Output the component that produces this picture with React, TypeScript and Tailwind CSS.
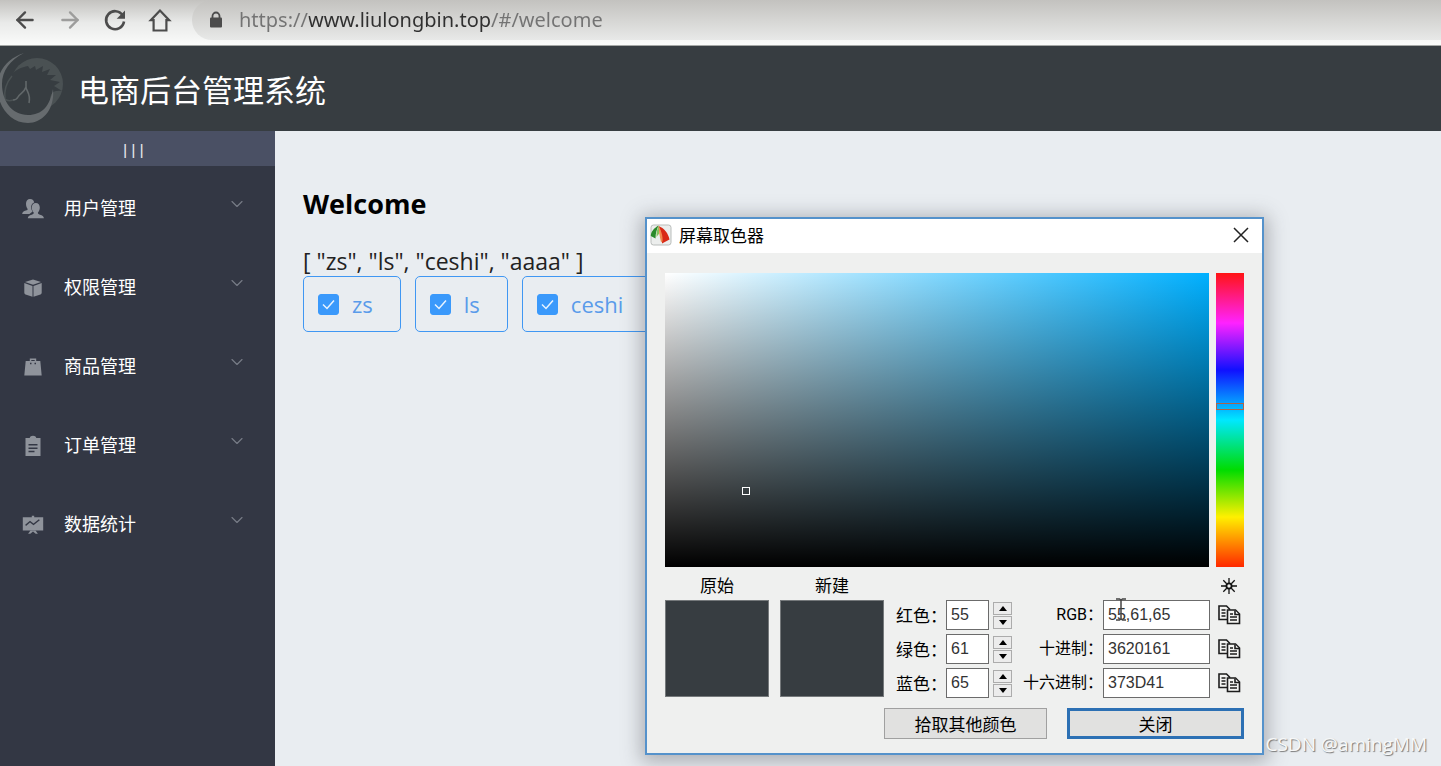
import { useState } from "react";
import type { ReactNode } from "react";
import { ArrowLeft, ArrowRight, ChevronDown } from "lucide-react";

type MenuItem = { label: string; icon: ReactNode };

const iconClass = "h-6 w-6 fill-[#8f939b]";

const menuItems: MenuItem[] = [
  {
    label: "用户管理",
    icon: (
      <svg viewBox="0 0 24 24" className={iconClass}>
        <path d="M9 2c2.6 0 4 1.5 4.200 3.600C11 6.500 10 8.400 10.200 10.800c.1 1.600.6 2.700 1.400 3.700L8.500 17H1.200c0-2 1.500-2.700 3.600-3.400 1.500-.5 2-.9 1.800-1.700C5.500 10.700 5 9 5 6.600 5 3.700 6.600 2 9 2z" />
        <path d="M14.800 6c2.500 0 4 1.800 4 4.500 0 2.100-.7 3.900-1.800 5-.3 1.200.3 1.700 2 2.200 2.300.7 3.800 1.400 3.900 3.600H6.800c.1-2.200 1.600-2.900 3.900-3.600 1.700-.5 2.200-1 2-2.200-1.200-1.100-1.900-2.900-1.900-5C10.800 7.800 12.300 6 14.800 6z" />
      </svg>
    ),
  },
  {
    label: "权限管理",
    icon: (
      <svg viewBox="0 0 24 24" className={iconClass}>
        <path d="M12 3.500l8 2.400-8 2.900-8-2.900z" />
        <path d="M3.300 7l8.200 2.900v10.900l-7-2.400c-.8-.3-1.200-.9-1.200-1.700zM20.700 7v9.700c0 .8-.4 1.400-1.200 1.700l-7 2.400V9.900z" />
      </svg>
    ),
  },
  {
    label: "商品管理",
    icon: (
      <svg viewBox="0 0 24 24" className={iconClass}>
        <path
          fillRule="evenodd"
          d="M8.800 6V3.500h6.400V6h4.100l1.400 14.500H3.300L4.700 6zm1.500 0h3.400V4.900h-3.400zM9 7.700v1.500h1.500V7.700zm4.500 0v1.500H15V7.700z"
        />
      </svg>
    ),
  },
  {
    label: "订单管理",
    icon: (
      <svg viewBox="0 0 24 24" className={iconClass}>
        <path
          fillRule="evenodd"
          d="M4.500 4h4.200C9 2.700 10.300 1.800 12 1.800S15 2.700 15.300 4h4.200v18h-15zM7.500 10v1.500h9V10zm0 3.400v1.500h9v-1.500zm0 3.400v1.500h6v-1.500z"
        />
      </svg>
    ),
  },
  {
    label: "数据统计",
    icon: (
      <svg viewBox="0 0 24 24" className={iconClass}>
        <path
          fillRule="evenodd"
          d="M1.800 4.200h9V2.800h2.400v1.400h9v13.200H1.800zM5 13l4-3.400 3.500 2.700 6.300-5-.9-1-5.400 4.200L9 7.800l-4.800 4z"
        />
        <path d="M9.500 17.400h5l2.400 3.400h-2.200L12 18.600l-2.700 2.200H7.100z" />
      </svg>
    ),
  },
];

const users = ["zs", "ls", "ceshi", "aaaa"];

function BrowserBar() {
  const [url, setUrl] = useState("https://www.liulongbin.top/#/welcome");

  return (
    <div className="flex h-[46px] items-start border-b border-[#a5a8a6] bg-linear-to-b from-[#c3c2bf] via-[#e9eae9] via-50% to-[#fafbfa] pl-3">
      <div className="flex h-10 items-center gap-[19px]">
        <button aria-label="Back">
          <ArrowLeft className="h-[26px] w-[26px] text-[#4c4c4c]" strokeWidth={2.2} />
        </button>
        <button aria-label="Forward">
          <ArrowRight className="h-[26px] w-[26px] text-[#9d9d9c]" strokeWidth={2.2} />
        </button>
        <button aria-label="Reload">
          <svg viewBox="0 0 26 26" className="h-[26px] w-[26px]">
            <path
              d="M20.600 8.200A9 9 0 1 0 22 14.500"
              fill="none"
              stroke="#4c4c4c"
              strokeWidth="2.600"
            />
            <path d="M23 3.500v8.300h-8.300z" fill="#4c4c4c" />
          </svg>
        </button>
        <button aria-label="Home">
          <svg viewBox="0 0 26 26" className="h-[26px] w-[26px]">
            <path
              d="M13 3.500L3.800 13.200H6.600V23.500h12.800V13.200h2.800z"
              fill="none"
              stroke="#4c4c4c"
              strokeWidth="2.200"
            />
          </svg>
        </button>
      </div>
      <div className="ml-[19px] flex h-10 flex-1 items-center gap-4 rounded-l-full bg-linear-to-b from-[#c3c2bf] to-[#e8e9e8] pl-[17px]">
        <svg viewBox="0 0 14 18" className="h-[18px] w-[14px]">
          <path d="M3.500 8V5a3.500 3.500 0 0 1 7 0v3" fill="none" stroke="#4c4c4c" strokeWidth="1.800" />
          <rect x="1" y="6.500" width="12" height="10" rx="1" fill="#4c4c4c" />
        </svg>
        {/* host is darker than the scheme and the path */}
        <input
          aria-label="Address"
          value={url}
          onChange={(e) => setUrl(e.target.value)}
          className="min-w-0 flex-1 bg-[linear-gradient(90deg,#737373_70px,#2f2f2f_70px,#2f2f2f_252px,#737373_252px)] bg-clip-text font-['Noto_Sans',sans-serif] text-xl text-transparent caret-black outline-none"
        />
      </div>
    </div>
  );
}

function Logo() {
  return (
    <svg viewBox="0 0 64 72" className="h-[72px] w-16">
      <circle cx="37" cy="31" r="26" fill="#4a5153" />
      <path
        d="M5 46C4 38 6 30 10 24c4-7 12-10 18-11l2 3 5-3 1 4 7-4-1 6 8-3-3 6 9 0-6 5 10 2-6 4 8 5c-9-1-11 2-12 8 0 10-6 16-18 16C18 62 8 56 5 46z"
        fill="#373d41"
      />
      <path
        d="M5 46C4 38 6 30 12 23M5 46c2 2 5 2 8 1"
        fill="none"
        stroke="#4a5153"
        strokeWidth="1.500"
      />
      <path
        d="M24 0C8 5-2 18-3 32c0 20 12 38 31 38 15 0 27-14 25-34-3 17-11 26-25 26C12 62 2 48 2 31 2 18 10 7 24 0z"
        fill="#666b6e"
      />
      <path
        d="M26 28v6c-2 6-6 6-8 10-1 2-3 3-5 3M26 34c0 4 5 6 3 16"
        fill="none"
        stroke="#62686a"
        strokeWidth="1.600"
      />
    </svg>
  );
}

function Sidebar() {
  return (
    <aside className="w-[275px] shrink-0 bg-[#333744] text-white">
      <button className="block h-[35px] w-full bg-[#4a5064] pr-2 text-center text-[15px] leading-[37px] font-semibold text-[#e4e6ea]">
        |||
      </button>
      <nav className="pt-[2px]">
        {menuItems.map((item) => (
          <button key={item.label} className="flex h-[79px] w-full items-center pr-7 pl-[21px]">
            <span className="pt-[2px]">{item.icon}</span>
            <span className="ml-[19px] text-lg">{item.label}</span>
            <ChevronDown className="mb-2 ml-auto h-5 w-5 text-[#777b86]" strokeWidth={1.4} />
          </button>
        ))}
      </nav>
    </aside>
  );
}

function UserCheckbox({ name }: { name: string }) {
  const [checked, setChecked] = useState(true);

  return (
    <label className="flex h-14 items-center gap-[13px] rounded-[5px] border border-[#3f97f3] pr-[27px] pl-[14px] text-[22px] text-[#5a9bea]">
      <span className="grid h-[21px] w-[21px] place-items-center">
        <input
          type="checkbox"
          checked={checked}
          onChange={(e) => setChecked(e.target.checked)}
          className="peer col-start-1 row-start-1 h-[21px] w-[21px] appearance-none rounded-[3px] border border-[#3a99fb] bg-white checked:bg-[#3a99fb]"
        />
        <svg
          viewBox="0 0 21 21"
          className="pointer-events-none invisible col-start-1 row-start-1 h-[21px] w-[21px] peer-checked:visible"
        >
          <path d="M5 10.500l4 4 7-8" fill="none" stroke="#e8f3ff" strokeWidth="1.500" />
        </svg>
      </span>
      {name}
    </label>
  );
}

function Channel({ id, label, initial }: { id: string; label: string; initial: number }) {
  const [value, setValue] = useState(initial);

  return (
    <div className="flex h-[30px] items-center">
      <label htmlFor={id} className="w-[50px] text-[17px] leading-7 whitespace-nowrap">
        {label}
      </label>
      <input
        id={id}
        value={value}
        onChange={(e) => setValue(Number(e.target.value) || 0)}
        className="h-[30px] w-[43px] border border-[#6b6b6b] bg-white pb-px pl-1 font-['Liberation_Sans',sans-serif] text-base text-[#333]"
      />
      <div className="ml-1 flex flex-col gap-px">
        <button
          aria-label={`${label} +`}
          onClick={() => setValue(Math.min(255, value + 1))}
          className="grid h-[13px] w-[19px] place-items-center border border-[#acacac] bg-[#ececec]"
        >
          <svg viewBox="0 0 8 5" className="h-[5px] w-2">
            <path d="M4 0l4 5H0z" />
          </svg>
        </button>
        <button
          aria-label={`${label} -`}
          onClick={() => setValue(Math.max(0, value - 1))}
          className="grid h-[13px] w-[19px] place-items-center border border-[#acacac] bg-[#ececec]"
        >
          <svg viewBox="0 0 8 5" className="h-[5px] w-2">
            <path d="M4 5l4-5H0z" />
          </svg>
        </button>
      </div>
    </div>
  );
}

function CodeField({ id, label, value }: { id: string; label: string; value: string }) {
  return (
    <div className="flex h-[30px] items-center">
      <label
        htmlFor={id}
        className="flex-1 text-right font-[Roboto,'Noto_Sans_CJK_SC',sans-serif] text-base whitespace-nowrap"
      >
        {label}
      </label>
      <input
        id={id}
        defaultValue={value}
        className="h-[30px] w-[107px] border border-[#6b6b6b] bg-white pb-px pl-1 font-['Liberation_Sans',sans-serif] text-base text-[#333]"
      />
      <button aria-label={`复制 ${label}`} className="mr-[3px] ml-2">
        <svg viewBox="0 0 23 20" className="h-5 w-[23px]" fill="#f4f4f2" stroke="#1d1d1d" strokeWidth="1.600">
          <path d="M1 1h7.500l3 3v10.500H1z" />
          <path d="M3.500 5h4M3.500 8h4M3.500 11h4" />
          <path d="M9.500 5h8l4 4v9.500h-12z" />
          <path d="M17 5.500v4h4M12 9h3M12 12h7M12 15h7" />
        </svg>
      </button>
    </div>
  );
}

function Swatch({ label }: { label: string }) {
  return (
    <div className="w-[104px]">
      <div className="h-5 text-center text-[17px] leading-[18px]">{label}</div>
      <div className="mt-1 h-[97px] border border-[#75797b] bg-[#373d41]" />
    </div>
  );
}

function ColorPicker() {
  return (
    <section className="absolute top-[217px] left-[645px] w-[619px] border-2 border-[#5592cb] bg-[#eff0ef] pb-[14px] font-['Noto_Sans_CJK_SC',sans-serif] text-black shadow-[0_3px_18px_4px_rgba(60,60,70,0.35)]">
      <header className="flex h-[34px] items-center bg-white pr-[13px] pb-[2px] pl-[3px]">
        <svg viewBox="0 0 22 22" className="h-[22px] w-[22px]">
          <rect x="1" y="1" width="20" height="20" rx="2.500" fill="#eceeed" stroke="#b9bdbb" />
          <path d="M8.500 1.500C4 4 .8 8 .8 12l4.700 2.500C5.500 9 7 5 8.500 1.500z" fill="#2a8a2b" />
          <path d="M9 1.500C7 5 6.300 9 6.500 13l2.700-3.500z" fill="#86c25c" />
          <path d="M8.500 2C14 4 18.500 9.500 19.500 15.500L12 19.500C12 13 11 7 8.500 2z" fill="#d92a17" />
          <path d="M8.500 2C9 7 9.500 12 11 18l1.500-.5C13 12 11 6 8.500 2z" fill="#f08a4e" />
        </svg>
        <h2 className="ml-[7px] text-[17px]">屏幕取色器</h2>
        <button aria-label="关闭窗口" className="ml-auto">
          <svg viewBox="0 0 16 16" className="h-4 w-4">
            <path d="M1 1l14 14M15 1L1 15" stroke="#222" strokeWidth="1.500" />
          </svg>
        </button>
      </header>

      <div className="px-[18px] pt-5">
        <div className="flex gap-[7px]">
          <div className="relative h-[294px] flex-1 bg-[linear-gradient(to_bottom,transparent,#000),linear-gradient(to_right,#fff,#00b0ff)]">
            <span className="absolute top-[214px] left-[77px] h-2 w-2 border border-white" />
          </div>
          <div className="relative h-[294px] w-7 bg-[linear-gradient(to_bottom,#ff1414,#ff22ff_17%,#1010ff_33%,#00e8ff_50%,#00dc00_67%,#fff000_83%,#ff2800)]">
            <span className="absolute top-[130px] left-0 h-[7px] w-7 border border-[#a8644c]" />
          </div>
        </div>

        <div className="mt-[9px] flex">
          <Swatch label="原始" />
          <div className="w-[11px]" />
          <Swatch label="新建" />
          <div className="mt-6 ml-3 flex flex-col gap-1">
            <Channel id="red" label="红色：" initial={55} />
            <Channel id="green" label="绿色：" initial={61} />
            <Channel id="blue" label="蓝色：" initial={65} />
          </div>
          <div className="flex flex-1 flex-col gap-1">
            <button aria-label="亮度" className="mr-[7px] h-5 self-end">
              <svg viewBox="0 0 16 16" className="h-4 w-4" fill="none" stroke="#111" strokeWidth="1.300">
                <circle cx="8" cy="8" r="2.600" strokeWidth="1.800" />
                <path d="M8 0v5M8 11v5M0 8h5M11 8h5M2.300 2.300l3.400 3.400M10.300 10.300l3.400 3.400M13.700 2.300l-3.400 3.400M5.700 10.300l-3.400 3.400" />
              </svg>
            </button>
            <div className="relative flex flex-col gap-1">
              <CodeField id="rgb" label="RGB：" value="55,61,65" />
              <CodeField id="dec" label="十进制：" value="3620161" />
              <CodeField id="hex" label="十六进制：" value="373D41" />
              <svg
                viewBox="0 0 10 23"
                className="pointer-events-none absolute -top-[2px] right-[118px] h-[23px] w-[10px]"
                fill="none"
                stroke="#444"
                strokeWidth="1.500"
              >
                <path d="M0 1h3.500L5 2l1.500-1H10M5 2v19M0 22h3.500L5 21l1.500 1H10" />
              </svg>
            </div>
          </div>
        </div>

        <div className="mt-[10px] flex justify-end gap-5">
          <button className="h-[31px] w-[163px] border border-[#a0a0a0] bg-[#e1e1e0] text-[17px] leading-7">
            拾取其他颜色
          </button>
          <button className="h-[31px] w-[177px] border-3 border-[#2c70b4] bg-[#e1e1e0] text-[17px] leading-6">
            关闭
          </button>
        </div>
      </div>
    </section>
  );
}

export default function App() {
  return (
    <div className="relative flex min-h-screen flex-col font-['Open_Sans','Noto_Sans_CJK_SC',sans-serif]">
      <BrowserBar />
      <header className="flex h-[85px] items-center bg-[#373d41]">
        <Logo />
        <h1 className="ml-[14px] pt-1 text-[31px] text-white">电商后台管理系统</h1>
      </header>
      <div className="flex flex-1">
        <Sidebar />
        <main className="min-w-0 flex-1 bg-[#e9edf1] px-7 pt-[53px]">
          <h2 className="text-[27px] leading-10 font-bold text-black">Welcome</h2>
          <p className="mt-[23px] text-[23px] leading-[29px] text-[#222]">
            [ {users.map((name) => `"${name}"`).join(", ")} ]
          </p>
          <div className="flex gap-[14px]">
            {users.map((name) => (
              <UserCheckbox key={name} name={name} />
            ))}
          </div>
        </main>
      </div>
      <ColorPicker />
      <span className="absolute right-[14px] bottom-2 text-[19px] text-[#f7f8f8] [text-shadow:1px_1px_1px_#777]">
        CSDN @amingMM
      </span>
    </div>
  );
}
